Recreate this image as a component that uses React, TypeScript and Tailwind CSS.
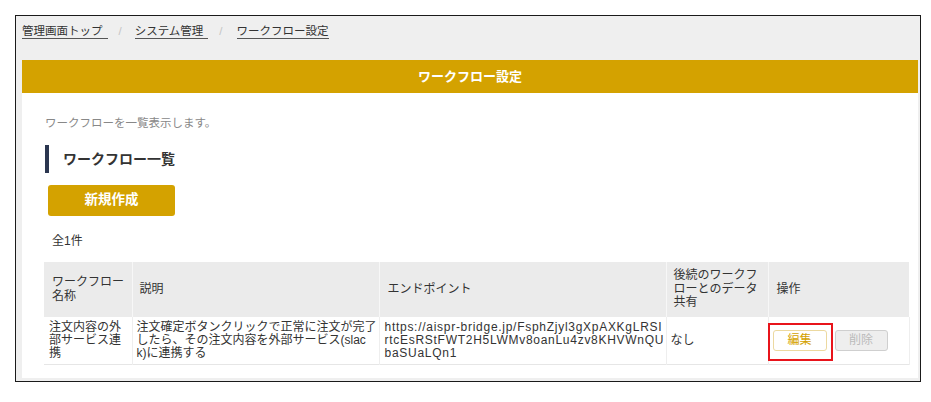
import React from "react";

const font = { fontFamily: '"Liberation Sans", "Noto Sans CJK JP", sans-serif' };

export default function App() {
  return (
    <div className="w-[931px] h-[402px] bg-white pt-[15px] pl-[15px]" style={font}>
      <div className="w-[906px] h-[367px] border border-[#1a1a1a] bg-[#efefef] flex flex-col">
        {/* breadcrumb */}
        <div className="h-[44px] pt-[8px] pl-[6px] flex items-start text-[11.5px] text-[#333]">
          <span className="inline-block leading-[14px] border-b border-[#555] pr-[5px]">管理画面トップ</span>
          <span className="leading-[14px] text-[#c4c4c4] ml-[11px] mr-[13px]">/</span>
          <span className="inline-block leading-[14px] border-b border-[#555] pr-[5px]">システム管理</span>
          <span className="leading-[14px] text-[#c4c4c4] ml-[11px] mr-[14px]">/</span>
          <span className="inline-block leading-[14px] border-b border-[#555]">ワークフロー設定</span>
        </div>
        {/* header bar */}
        <div className="ml-[6px] mr-[2px] h-[33px] bg-[#d4a200] flex items-center justify-center text-white font-bold text-[13px]">
          ワークフロー設定
        </div>
        {/* panel */}
        <div className="ml-[6px] mr-[2px] h-[285px] bg-white pl-[22px] flex flex-col">
          <div className="mt-[22px] ml-[1px] leading-[16px] text-[11.5px] text-[#888]">
            ワークフローを一覧表示します。
          </div>
          <div className="mt-[14px] ml-[1px] flex items-center h-[28px]">
            <div className="w-[4px] h-[28px] bg-[#2b3650]" />
            <div className="ml-[14px] text-[14px] font-bold text-[#333]">ワークフロー一覧</div>
          </div>
          <button className="mt-[12px] ml-[4px] w-[127px] h-[31px] rounded-[3px] bg-[#d4a200] text-white font-bold text-[13.5px] flex items-center justify-center">
            新規作成
          </button>
          <div className="mt-[17px] ml-[8px] leading-[16px] text-[12px] text-[#333]">全1件</div>
          <table className="mt-[13px] w-[865px] table-fixed border-collapse text-[12px] text-[#333]">
            <colgroup>
              <col className="w-[88px]" />
              <col className="w-[247px]" />
              <col className="w-[287px]" />
              <col className="w-[102px]" />
              <col className="w-[141px]" />
            </colgroup>
            <thead>
              <tr className="h-[55px] bg-[#ebebeb]">
                <th className="font-normal text-left align-middle pl-[8px] leading-[13.5px] border-r border-[#f7f7f7]">
                  ワークフロー<br />名称
                </th>
                <th className="font-normal text-left align-middle pl-[7px] leading-[13.5px] border-r border-[#f7f7f7]">説明</th>
                <th className="font-normal text-left align-middle pl-[8px] leading-[13.5px] border-r border-[#f7f7f7]">エンドポイント</th>
                <th className="font-normal text-left align-middle pl-[7px] leading-[13.5px] border-r border-[#f7f7f7] whitespace-nowrap">
                  後続のワークフ<br />ローとのデータ<br />共有
                </th>
                <th className="font-normal text-left align-middle pl-[8px] leading-[13.5px]">操作</th>
              </tr>
            </thead>
            <tbody>
              <tr className="h-[47px] bg-white border-b border-[#e6e6e6]">
                <td className="align-middle pl-[5px] leading-[13px] whitespace-nowrap border-r border-[#eeeeee]">
                  注文内容の外<br />部サービス連<br />携
                </td>
                <td className="align-middle pl-[4px] leading-[13px] whitespace-nowrap border-r border-[#eeeeee]">
                  注文確定ボタンクリックで正常に注文が完了<br />したら、その注文内容を外部サービス(slac<br />k)に連携する
                </td>
                <td className="align-middle pl-[5px] leading-[13px] whitespace-nowrap tracking-[0.06em] border-r border-[#eeeeee]">
                  https://aispr-bridge.jp/FsphZjyl3gXpAXKgLRSI<br />rtcEsRStFWT2H5LWMv8oanLu4zv8KHVWnQU<br />baSUaLQn1
                </td>
                <td className="align-middle pl-[4px] leading-[13px] border-r border-[#eeeeee]">なし</td>
                <td className="align-middle pl-[4px] border-r border-[#eeeeee]">
                  <div className="flex items-center">
                    <div className="relative">
                      <button className="w-[54px] h-[21px] rounded-[3px] border border-[#ecd9a0] bg-white text-[#d4a200] text-[12px] flex items-center justify-center">
                        編集
                      </button>
                      <div className="absolute left-[-5px] top-[-7px] right-[-6px] bottom-[-10px] border-2 border-[#e8141b]" />
                    </div>
                    <button className="ml-[8px] w-[53px] h-[21px] rounded-[3px] border border-[#cfcfcf] bg-[#eeeeee] text-[#bbbbbb] text-[12px] flex items-center justify-center">
                      削除
                    </button>
                  </div>
                </td>
              </tr>
            </tbody>
          </table>
        </div>
      </div>
    </div>
  );
}
